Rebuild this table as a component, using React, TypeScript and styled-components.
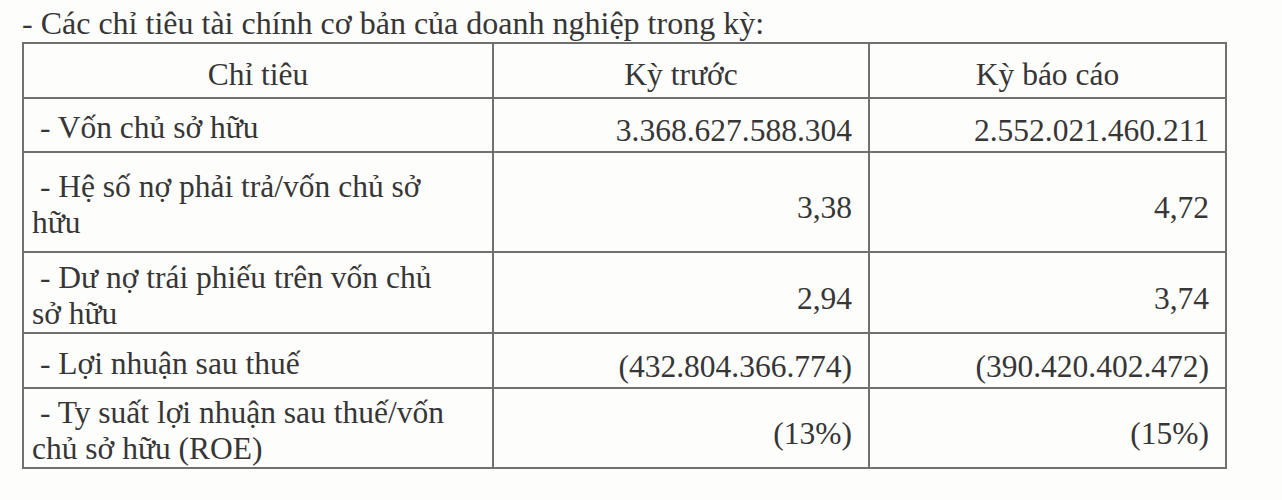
import React from "react";
import styled, { createGlobalStyle } from "styled-components";

type Row = {
  label: string;
  before: string;
  current: string;
  height: number;
};

const rows: Row[] = [
  { label: " - Vốn chủ sở hữu", before: "3.368.627.588.304", current: "2.552.021.460.211", height: 54 },
  { label: " - Hệ số nợ phải trả/vốn chủ sở hữu", before: "3,38", current: "4,72", height: 100 },
  { label: " - Dư nợ trái phiếu trên vốn chủ sở hữu", before: "2,94", current: "3,74", height: 81 },
  { label: " - Lợi nhuận sau thuế", before: "(432.804.366.774)", current: "(390.420.402.472)", height: 55 },
  { label: " - Ty suất lợi nhuận sau thuế/vốn chủ sở hữu (ROE)", before: "(13%)", current: "(15%)", height: 80 },
];

const GlobalStyle = createGlobalStyle`
  html, body {
    margin: 0;
    padding: 0;
    background: #fdfdfc;
  }
  body {
    font-family: "Liberation Serif", "Times New Roman", serif;
    color: #363636;
  }
`;

const Page = styled.div`
  width: 1282px;
  height: 500px;
  overflow: hidden;
  padding: 5px 0 0 22px;
  box-sizing: border-box;
`;

const Intro = styled.p`
  margin: 0;
  font-size: 32px;
  line-height: 37px;
  white-space: nowrap;
`;

const Table = styled.table`
  border-collapse: collapse;
  table-layout: fixed;
  width: 1203px;
  font-size: 31.5px;
`;

const HeadCell = styled.th<{ $w: number }>`
  width: ${(p) => p.$w}px;
  height: 55px;
  box-sizing: border-box;
  border: 2px solid #707070;
  font-weight: normal;
  text-align: center;
  vertical-align: middle;
  padding: 8px 0 0;
  line-height: 36px;
`;

const LabelCell = styled.td<{ $h: number }>`
  height: ${(p) => p.$h}px;
  box-sizing: border-box;
  border: 2px solid #707070;
  padding: 6px 32px 0 8px;
  line-height: 36px;
  white-space: pre-wrap;
  vertical-align: middle;
`;

const NumCell = styled.td`
  box-sizing: border-box;
  border: 2px solid #707070;
  padding: 12px 16px 0 0;
  line-height: 36px;
  text-align: right;
  vertical-align: middle;
`;

export default function App() {
  return (
    <Page>
      <GlobalStyle />
      <Intro>- Các chỉ tiêu tài chính cơ bản của doanh nghiệp trong kỳ:</Intro>
      <Table>
        <thead>
          <tr>
            <HeadCell $w={470}>Chỉ tiêu</HeadCell>
            <HeadCell $w={376}>Kỳ trước</HeadCell>
            <HeadCell $w={357}>Kỳ báo cáo</HeadCell>
          </tr>
        </thead>
        <tbody>
          {rows.map((r) => (
            <tr key={r.label}>
              <LabelCell $h={r.height}>{r.label}</LabelCell>
              <NumCell>{r.before}</NumCell>
              <NumCell>{r.current}</NumCell>
            </tr>
          ))}
        </tbody>
      </Table>
    </Page>
  );
}
